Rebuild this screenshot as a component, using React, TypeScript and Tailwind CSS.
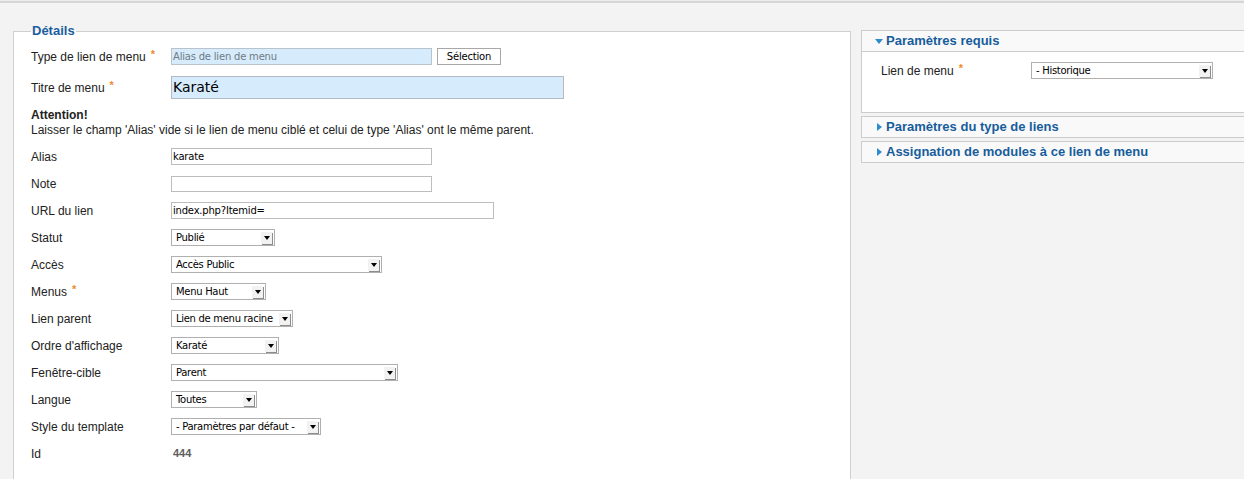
import type { ReactNode } from 'react';

const labelFont = { fontFamily: '"Liberation Sans", Arial, sans-serif' };
const fieldFont = { fontFamily: '"DejaVu Sans", sans-serif' };

function Star() {
  return <span className="ml-[5px] relative -top-[3px] text-[11px] font-bold text-[#f08a2c]">*</span>;
}

function Row({ label, required, children }: { label: string; required?: boolean; children: ReactNode }) {
  return (
    <div className="flex h-[27px] items-center">
      <div className="w-[140px] shrink-0 text-[12px] text-[#222]">
        {label}
        {required && <Star />}
      </div>
      {children}
    </div>
  );
}

function Input({ value, className }: { value?: string; className: string }) {
  return (
    <div
      className={`flex h-[17px] items-center border border-[#bdbdbd] bg-white px-[1px] text-[10px] tracking-[-0.2px] text-black ${className}`}
      style={fieldFont}
    >
      {value}
    </div>
  );
}

function Select({ value, className }: { value: string; className: string }) {
  return (
    <div
      className={`flex h-[17px] items-center justify-between border border-[#b0b0b0] bg-white pl-[4px] pr-[2px] text-[10px] tracking-[-0.3px] text-black ${className}`}
      style={fieldFont}
    >
      <span className="whitespace-nowrap">{value}</span>
      <span className="flex h-[12px] w-[11px] shrink-0 items-center justify-center bg-[#f2f2f2] shadow-[1px_1px_0_#8c8c8c]">
        <span className="h-0 w-0 border-x-[3px] border-t-[4px] border-x-transparent border-t-black" />
      </span>
    </div>
  );
}

function PanelHeader({ title, open }: { title: string; open?: boolean }) {
  return (
    <div className="flex h-[20px] items-center bg-[#f9f9f9] pl-[10px] text-[13px] font-bold text-[#175d9c]">
      <span className="flex w-[14px] justify-center">
        {open ? (
          <span className="h-0 w-0 border-x-[4px] border-t-[5px] border-x-transparent border-t-[#2f8ccc]" />
        ) : (
          <span className="h-0 w-0 border-y-[4px] border-l-[5px] border-y-transparent border-l-[#2f8ccc]" />
        )}
      </span>
      <span>{title}</span>
    </div>
  );
}

export default function App() {
  return (
    <div className="h-[479px] w-full overflow-hidden bg-[#f3f3f3]" style={labelFont}>
      <div className="h-px bg-[#ececec]" />
      <div className="h-[2px] bg-[#d6d6d6]" />
      <div className="flex pl-[13px]">
        <fieldset className="mt-[20px] h-[480px] w-[838px] shrink-0 border border-[#cfcfcf] bg-white pl-[17px]">
          <legend className="px-[1px] text-[13px] font-bold leading-[16px] text-[#1b5e9f]">Détails</legend>
          <div className="pt-[4px]">
            <Row label="Type de lien de menu" required>
              <Input value="Alias de lien de menu" className="w-[261px] !border-[#b9c3cb] !bg-[#d6ecfc] !text-[#6f7a84]" />
              <button
                className="ml-[5px] h-[17px] w-[64px] border border-[#a8a8a8] bg-white text-[10px] tracking-[-0.2px] text-black"
                style={fieldFont}
              >
                Sélection
              </button>
            </Row>
            <div className="flex h-[35px] items-center">
              <div className="w-[140px] shrink-0 text-[12px] text-[#222]">
                Titre de menu
                <Star />
              </div>
              <div
                className="flex h-[23px] w-[393px] items-center border border-[#b3b9bf] bg-[#d6ecfc] px-[1px] text-[14px] text-black"
                style={fieldFont}
              >
                Karaté
              </div>
            </div>
            <div className="pt-[3px] pb-[5px] text-[12px] leading-[15px] text-[#222]">
              <div className="font-bold">Attention!</div>
              <div>Laisser le champ 'Alias' vide si le lien de menu ciblé et celui de type 'Alias' ont le même parent.</div>
            </div>
            <Row label="Alias">
              <Input value="karate" className="w-[261px]" />
            </Row>
            <Row label="Note">
              <Input className="w-[261px] !h-[16px]" />
            </Row>
            <Row label="URL du lien">
              <Input value="index.php?Itemid=" className="w-[323px]" />
            </Row>
            <Row label="Statut">
              <Select value="Publié" className="w-[104px]" />
            </Row>
            <Row label="Accès">
              <Select value="Accès Public" className="w-[211px]" />
            </Row>
            <Row label="Menus" required>
              <Select value="Menu Haut" className="w-[95px]" />
            </Row>
            <Row label="Lien parent">
              <Select value="Lien de menu racine" className="w-[122px]" />
            </Row>
            <Row label="Ordre d'affichage">
              <Select value="Karaté" className="w-[108px]" />
            </Row>
            <Row label="Fenêtre-cible">
              <Select value="Parent" className="w-[227px]" />
            </Row>
            <Row label="Langue">
              <Select value="Toutes" className="w-[86px]" />
            </Row>
            <Row label="Style du template">
              <Select value="- Paramètres par défaut -" className="w-[150px]" />
            </Row>
            <Row label="Id">
              <span className="pl-[2px] text-[11px] font-bold text-[#5e5e5e]">444</span>
            </Row>
          </div>
        </fieldset>

        <div className="ml-[10px] mt-[27px] flex w-[400px] shrink-0 flex-col gap-[3px]">
          <div className="border border-[#cccccc]">
            <PanelHeader title="Paramètres requis" open />
            <div className="h-[61px] border-t border-[#cccccc] bg-white pl-[19px] pt-[10px]">
              <div className="flex h-[17px] items-center">
                <div className="w-[150px] shrink-0 text-[12px] text-[#222]">
                  Lien de menu
                  <Star />
                </div>
                <Select value="- Historique" className="w-[182px]" />
              </div>
            </div>
          </div>
          <div className="border border-[#cccccc]">
            <PanelHeader title="Paramètres du type de liens" />
          </div>
          <div className="border border-[#cccccc]">
            <PanelHeader title="Assignation de modules à ce lien de menu" />
          </div>
        </div>
      </div>
    </div>
  );
}
